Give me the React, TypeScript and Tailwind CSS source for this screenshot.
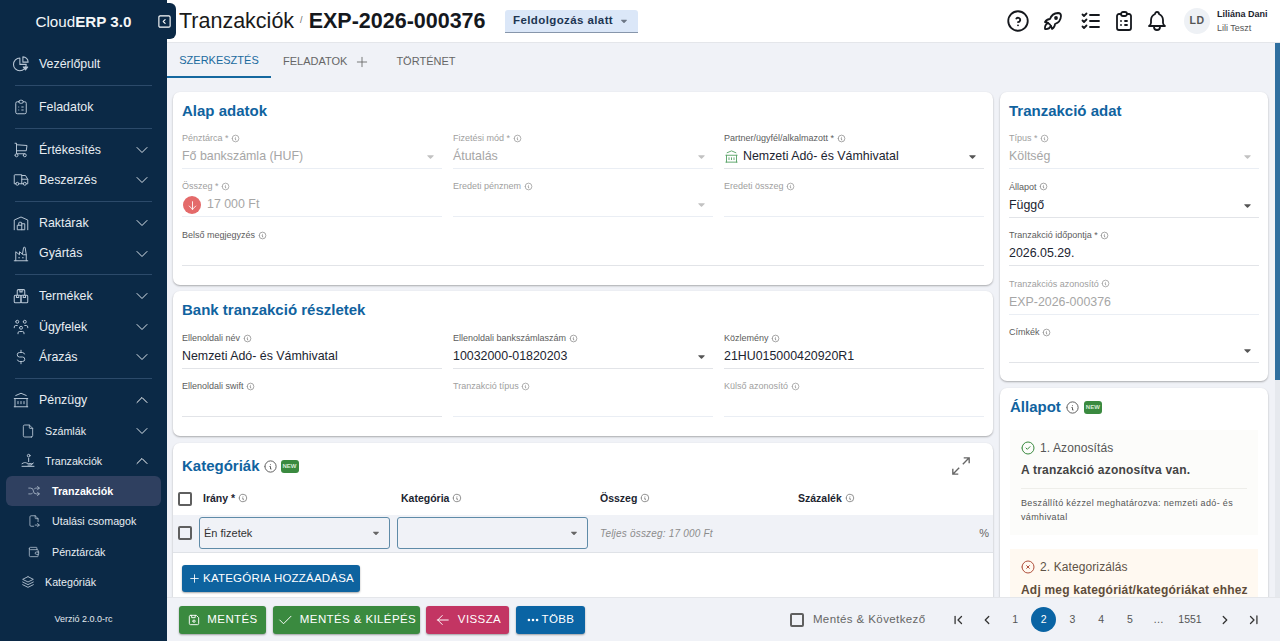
import React from "react";
import {
  TbChevronDown, TbChevronUp, TbClipboardList, TbShoppingCart, TbTruck, TbBuildingWarehouse,
  TbBuildingFactory2, TbUsersGroup, TbCurrencyDollar, TbBuildingBank, TbFile, TbArrowsShuffle,
  TbFileExport, TbWallet, TbStack2, TbHelpCircle, TbRocket, TbListCheck, TbBell, TbInfoCircle, TbPlus,
  TbCaretDownFilled, TbArrowDown, TbCircleCheck, TbCircleX, TbDeviceFloppy, TbCheck, TbArrowLeft, TbDots,
  TbChevronLeft, TbChevronRight, TbChevronLeftPipe, TbChevronRightPipe, TbSquareChevronLeft,
} from "react-icons/tb";

type IconT = React.ComponentType<{ size?: number; className?: string; strokeWidth?: number }>;

function HandCoin({ size = 16, className = "" }: { size?: number; className?: string }) {
  return (
    <svg width={size} height={size} viewBox="0 0 24 24" fill="none" stroke="currentColor" strokeWidth={1.5} strokeLinecap="round" strokeLinejoin="round" className={className}>
      <circle cx="13" cy="4" r="2" />
      <path d="M13 8v5" />
      <path d="M3 20h18" />
      <path d="M3 16c3-2 5-2 7-1l3 1h4c1 0 1 2 0 2h-5" />
      <path d="M17 17l3-2" />
    </svg>
  );
}

function PieIcon({ size = 16, className = "" }: { size?: number; className?: string }) {
  return (
    <svg width={size} height={size} viewBox="0 0 24 24" fill="none" stroke="currentColor" strokeWidth={1.4} strokeLinejoin="round" className={className}>
      <path d="M10.5 4a8.5 8.5 0 1 0 8.5 8.5h-8.5z" />
      <path d="M14.5 2.5a7 7 0 0 1 7 7h-7z" />
      <path d="M15 16h6l-3 4z" fill="currentColor" />
    </svg>
  );
}

function BoxesIcon({ size = 16, className = "" }: { size?: number; className?: string }) {
  return (
    <svg width={size} height={size} viewBox="0 0 24 24" fill="none" stroke="currentColor" strokeWidth={1.4} strokeLinejoin="round" className={className}>
      <path d="M7 11V5a1.5 1.5 0 0 1 1.5-1.5h7A1.5 1.5 0 0 1 17 5v6" />
      <path d="M10.5 3.5v3h3v-3" />
      <rect x="3" y="11" width="9" height="10" rx="1.5" />
      <rect x="12" y="11" width="9" height="10" rx="1.5" />
      <path d="M6 11v3h3v-3M15 11v3h3v-3" />
    </svg>
  );
}

function NavItem({ icon: Icon, label, chevron, sub }: { icon: IconT; label: string; chevron?: "up" | "down"; sub?: boolean }) {
  return (
    <div className={`relative flex items-center pl-[13px] pr-[15px] text-[#e8edf2] ${sub ? "h-[30.3px]" : "h-[30.5px]"}`}>
      <span className={`flex w-[16px] justify-center ${sub ? "ml-[7px]" : ""}`}>
        <Icon size={sub ? 16 : 18} strokeWidth={1.3} className="shrink-0 text-[#b9c7d6]" />
      </span>
      <span className={`${sub ? "ml-[9px] text-[10.7px]" : "ml-[10px] text-[12.4px]"} flex-1 whitespace-nowrap`}>{label}</span>
      {chevron === "down" && <TbChevronDown size={20} strokeWidth={1.2} className="text-[#dbe3ea]" />}
      {chevron === "up" && <TbChevronUp size={20} strokeWidth={1.2} className="text-[#ffffff]" />}
    </div>
  );
}

function Divider() {
  return <div className="mx-[15px] my-[5.65px] h-px bg-[#2c4a6a]" />;
}

function SubSub({ icon: Icon, label, active }: { icon: IconT; label: string; active?: boolean }) {
  return (
    <div className={`mx-[6px] flex h-[30.3px] items-center rounded-[6px] pl-[21px] ${active ? "bg-[#2f4060] font-bold text-white" : "text-[#e8edf2]"}`}>
      <span className="flex w-[14px] justify-center"><Icon size={14} strokeWidth={1.3} className="shrink-0 text-[#b9c7d6]" /></span>
      <span className="ml-[11px] whitespace-nowrap text-[10.7px]">{label}</span>
    </div>
  );
}

function Sidebar() {
  return (
    <aside className="flex h-full w-[167px] shrink-0 flex-col bg-[#0b2946]">
      <div className="flex h-[49px] items-start justify-center pt-[12px] text-[15.2px] leading-[20px] text-[#f4f6f8]">
        <span>Cloud<span className="font-bold">ERP 3.0</span></span>
      </div>
      <NavItem icon={PieIcon as IconT} label="Vezérlőpult" />
      <Divider />
      <NavItem icon={TbClipboardList} label="Feladatok" />
      <Divider />
      <NavItem icon={TbShoppingCart} label="Értékesítés" chevron="down" />
      <NavItem icon={TbTruck} label="Beszerzés" chevron="down" />
      <Divider />
      <NavItem icon={TbBuildingWarehouse} label="Raktárak" chevron="down" />
      <NavItem icon={TbBuildingFactory2} label="Gyártás" chevron="down" />
      <Divider />
      <NavItem icon={BoxesIcon as IconT} label="Termékek" chevron="down" />
      <NavItem icon={TbUsersGroup} label="Ügyfelek" chevron="down" />
      <NavItem icon={TbCurrencyDollar} label="Árazás" chevron="down" />
      <Divider />
      <NavItem icon={TbBuildingBank} label="Pénzügy" chevron="up" />
      <NavItem sub icon={TbFile} label="Számlák" chevron="down" />
      <NavItem sub icon={HandCoin as IconT} label="Tranzakciók" chevron="up" />
      <SubSub active icon={TbArrowsShuffle} label="Tranzakciók" />
      <SubSub icon={TbFileExport} label="Utalási csomagok" />
      <SubSub icon={TbWallet} label="Pénztárcák" />
      <NavItem sub icon={TbStack2} label="Kategóriák" />
      <div className="mt-[16px] text-center text-[9px] text-[#e3e9ef]">Verzió 2.0.0-rc</div>
    </aside>
  );
}

function Info({ size = 10, className = "" }: { size?: number; className?: string }) {
  return <TbInfoCircle size={size} strokeWidth={1.5} className={`inline-block align-[-1.5px] ${className}`} />;
}

function Field({ label, value, disabled, select, leading }: { label: string; value?: string; disabled?: boolean; select?: boolean; leading?: React.ReactNode }) {
  return (
    <div className={`flex h-[37px] flex-col border-b ${disabled ? "border-[#eaeef4]" : "border-[#e2e4e8]"}`}>
      <div className={`h-[12px] whitespace-nowrap text-[9px] leading-[12px] ${disabled ? "text-[#a0a0a0]" : "text-[#5c5c5c]"}`}>
        {label} <Info size={9} className={disabled ? "text-[#777]" : "text-[#666]"} />
      </div>
      <div className="flex flex-1 items-center pt-[1px]">
        {leading}
        <span className={`flex-1 whitespace-nowrap text-[12.4px] ${disabled ? "text-[#a6a6a6]" : "text-[#1c2430]"}`}>{value}</span>
        {select && <TbCaretDownFilled size={11} className={`mr-[6px] ${disabled ? "text-[#c2c2c2]" : "text-[#555]"}`} />}
      </div>
    </div>
  );
}

function Card({ children, className = "" }: { children: React.ReactNode; className?: string }) {
  return <section className={`shrink-0 rounded-[7px] bg-white shadow-[0_1px_2px_rgba(0,0,0,0.3)] ${className}`}>{children}</section>;
}

function Title({ children }: { children: React.ReactNode }) {
  return <h2 className="h-[20px] text-[15px] font-bold leading-[20px] text-[#10639f]">{children}</h2>;
}

function NewBadge() {
  return <span className="flex h-[13px] w-[18px] items-center justify-center rounded-[3px] bg-[#3a8a3f] text-[6px] font-bold leading-none text-[#d8ecd9]">NEW</span>;
}

function Box({ className = "" }: { className?: string }) {
  return <span className={`block h-[14px] w-[14px] shrink-0 rounded-[2px] border-2 border-[#5f5f5f] ${className}`} />;
}

function Btn({ bg, w, icon, children }: { bg: string; w: string; icon: React.ReactNode; children: React.ReactNode }) {
  return (
    <button className={`flex h-[28px] ${w} ${bg} items-center justify-center gap-[6px] rounded-[3px] text-[11.5px] font-medium tracking-[0.4px] text-white shadow-[0_1px_2px_rgba(0,0,0,0.35)]`}>
      {icon}
      {children}
    </button>
  );
}

function PageNum({ n, active }: { n: string; active?: boolean }) {
  return (
    <span className={`flex h-[25px] min-w-[25px] items-center justify-center rounded-full text-[10.5px] ${active ? "bg-[#0a64a4] text-white" : "text-[#555]"}`}>{n}</span>
  );
}

export default function App() {
  return (
    <div className="flex h-screen w-full overflow-hidden bg-[#f0f2f7] font-['Liberation_Sans',Arial,sans-serif] text-[#1c2430]">
      <Sidebar />
      <div className="relative flex min-w-0 flex-1 flex-col">
        <button className="absolute -left-[17px] top-[3px] z-10 flex h-[36px] w-[26px] items-center justify-center rounded-r-[6px] bg-[#0b2946] pl-[2px] text-white">
          <TbSquareChevronLeft size={15} strokeWidth={1.8} />
        </button>
        <header className="flex h-[43px] shrink-0 items-center border-b border-[#e4e6ea] bg-white pl-[12px] pr-[12px]">
          <span className="pt-[1px] text-[21.5px] leading-none text-[#1a1a1a]">Tranzakciók</span>
          <span className="mx-[6px] text-[9px] text-[#666]">/</span>
          <span className="pt-[1px] text-[21.5px] font-bold leading-none text-[#15181d]">EXP-2026-000376</span>
          <div className="ml-[19px] flex h-[23px] w-[133px] items-center justify-center gap-[6px] rounded-t-[3px] border-b border-[#8796ab] bg-[#dbe7f8] text-[11.5px] font-bold tracking-[0.4px] text-[#1d3552]">
            Feldolgozás alatt
            <TbCaretDownFilled size={10} className="text-[#6d7786]" />
          </div>
          <div className="ml-auto flex items-center">
            <TbHelpCircle size={26} strokeWidth={1.7} className="text-[#15181d]" />
            <TbRocket size={24} strokeWidth={1.8} className="ml-[10px] text-[#15181d]" />
            <TbListCheck size={24} strokeWidth={1.8} className="ml-[14px] text-[#15181d]" />
            <TbClipboardList size={24} strokeWidth={1.8} className="ml-[9px] text-[#15181d]" />
            <TbBell size={24} strokeWidth={1.8} className="ml-[9px] text-[#15181d]" />
            <span className="ml-[15px] flex h-[26px] w-[26px] items-center justify-center rounded-full bg-[#eef1f5] text-[10.5px] font-bold tracking-[0.5px] text-[#555]">LD</span>
            <div className="ml-[7px] w-[51px] text-[9px] leading-[14px]">
              <div className="whitespace-nowrap font-bold text-[#1c2430]">Liliána Dani</div>
              <div className="whitespace-nowrap text-[#555]">Lili Teszt</div>
            </div>
          </div>
        </header>

        <div className="flex min-h-0 flex-1">
          <div className="flex min-w-0 flex-1 flex-col">
            <nav className="flex h-[35px] shrink-0 text-[11px]">
              <div className="flex w-[104px] items-center justify-center border-b-2 border-[#15689f] pt-[2px] text-[#1a6a9e]">SZERKESZTÉS</div>
              <div className="ml-[12px] flex items-center pt-[2px] text-[#666]">FELADATOK<TbPlus size={16} strokeWidth={1.3} className="ml-[7px]" /></div>
              <div className="ml-[26px] flex items-center pt-[2px] text-[#666]">TÖRTÉNET</div>
            </nav>
            <div className="flex min-h-0 flex-1 gap-[7px] overflow-hidden pl-[6px] pt-[14px]">
              <div className="flex w-[820px] shrink-0 flex-col gap-[6px]">
                <Card className="h-[193px] px-[9px] pt-[9px]">
                  <Title>Alap adatok</Title>
                  <div className="mt-[11px] grid grid-cols-3 gap-x-[11px] gap-y-[11px]">
                    <Field label="Pénztárca *" value="Fő bankszámla (HUF)" disabled select />
                    <Field label="Fizetési mód *" value="Átutalás" disabled select />
                    <Field label="Partner/ügyfél/alkalmazott *" value="Nemzeti Adó- és Vámhivatal" select leading={<TbBuildingBank size={15} strokeWidth={1.5} className="mr-[4px] text-[#5aa469]" />} />
                    <Field label="Összeg *" value="17 000 Ft" disabled leading={
                      <span className="ml-[1px] mr-[6px] mt-[1px] flex h-[18px] w-[18px] items-center justify-center rounded-full bg-[#e46a6a] text-white"><TbArrowDown size={13} strokeWidth={1.6} /></span>
                    } />
                    <Field label="Eredeti pénznem" disabled select />
                    <Field label="Eredeti összeg" disabled />
                  </div>
                  <div className="mt-[12px] flex h-[37px] flex-col border-b border-[#e2e4e8]">
                    <div className="whitespace-nowrap text-[9px] leading-[12px] text-[#5c5c5c]">Belső megjegyzés <Info size={9} className="text-[#666]" /></div>
                  </div>
                </Card>

                <Card className="h-[145px] px-[9px] pt-[9px]">
                  <Title>Bank tranzakció részletek</Title>
                  <div className="mt-[12px] grid grid-cols-3 gap-x-[11px] gap-y-[11px]">
                    <Field label="Ellenoldali név" value="Nemzeti Adó- és Vámhivatal" />
                    <Field label="Ellenoldali bankszámlaszám" value="10032000-01820203" select />
                    <Field label="Közlemény" value="21HU015000420920R1" />
                    <Field label="Ellenoldali swift" />
                    <Field label="Tranzakció típus" disabled />
                    <Field label="Külső azonosító" disabled />
                  </div>
                </Card>

                <Card className="mt-[1px] h-[200px] pt-[12px]">
                  <div className="flex items-center pl-[9px] pr-[22px]">
                    <Title>Kategóriák</Title>
                    <Info size={15} className="ml-[3px] text-[#555]" />
                    <span className="ml-[3px] flex"><NewBadge /></span>
                    <svg width="20" height="20" viewBox="0 0 22 22" fill="none" stroke="#666" strokeWidth="1.5" className="my-[1px] ml-auto">
                      <path d="M14 2h6v6M20 2l-7 7M8 20H2v-6M2 20l7-7" />
                    </svg>
                  </div>
                  <div className="relative mt-[5px] flex h-[33px] items-center pl-[5px] text-[10.5px] font-bold text-[#1c2430]">
                    <Box />
                    <div className="ml-[11px] w-[198px] whitespace-nowrap">Irány * <Info size={10} className="font-normal text-[#555]" /></div>
                    <div className="w-[199px] whitespace-nowrap">Kategória <Info size={10} className="text-[#555]" /></div>
                    <div className="w-[198px] whitespace-nowrap">Összeg <Info size={10} className="text-[#555]" /></div>
                    <div className="whitespace-nowrap">Százalék <Info size={10} className="text-[#555]" /></div>
                  </div>
                  <div className="flex h-[38px] items-center border-b border-[#dfe2e7] bg-[#f0f2f7] pb-[1px] pl-[5px] pr-[4px]">
                    <Box />
                    <div className="ml-[7px] flex h-[32px] w-[191px] items-center rounded-[3px] border border-[#5f8ba8] pl-[4px] pr-[8px] text-[11px] text-[#333]">
                      <span className="flex-1">Én fizetek</span>
                      <TbCaretDownFilled size={10} className="text-[#666]" />
                    </div>
                    <div className="ml-[7px] flex h-[32px] w-[191px] items-center justify-end rounded-[3px] border border-[#5f8ba8] pr-[8px]">
                      <TbCaretDownFilled size={10} className="text-[#666]" />
                    </div>
                    <span className="ml-[12px] text-[10px] italic tracking-[0.2px] text-[#8c8c8c]">Teljes összeg: 17 000 Ft</span>
                    <span className="ml-auto text-[11px] text-[#666]">%</span>
                  </div>
                  <button className="ml-[9px] mt-[12px] flex h-[27px] w-[178px] items-center justify-center gap-[2px] rounded-[3px] bg-[#0e639f] text-[11.5px] font-medium tracking-[0.2px] text-white shadow-[0_1px_2px_rgba(0,0,0,0.35)]">
                    <TbPlus size={13} strokeWidth={1.6} />KATEGÓRIA HOZZÁADÁSA
                  </button>
                </Card>
              </div>

              <div className="flex w-[268px] shrink-0 flex-col gap-[7px]">
                <Card className="h-[289px] px-[9px] pt-[9px]">
                  <Title>Tranzakció adat</Title>
                  <div className="mt-[11px] flex flex-col gap-[11.5px]">
                    <Field label="Típus *" value="Költség" disabled select />
                    <Field label="Állapot" value="Függő" select />
                    <Field label="Tranzakció időpontja *" value="2026.05.29." />
                    <Field label="Tranzakciós azonosító" value="EXP-2026-000376" disabled />
                    <Field label="Címkék" select />
                  </div>
                </Card>
                <Card className="h-[260px] px-[10px] pt-[9px]">
                  <div className="flex items-center">
                    <Title>Állapot</Title>
                    <Info size={15} className="ml-[4px] text-[#555]" />
                    <span className="ml-[4px] flex"><NewBadge /></span>
                  </div>
                  <div className="mt-[13px] h-[105px] bg-[#fcfcfa] px-[11px] pt-[10px]">
                    <div className="flex h-[16px] items-center text-[12px] text-[#555]">
                      <TbCircleCheck size={16} strokeWidth={1.5} className="-ml-[1px] text-[#3a8a3f]" />
                      <span className="ml-[4px] tracking-[0.1px]">1. Azonosítás</span>
                    </div>
                    <div className="mt-[6px] h-[16px] text-[12px] font-bold leading-[16px] tracking-[0.2px] text-[#444]">A tranzakció azonosítva van.</div>
                    <div className="mt-[10px] border-t border-[#eeeeea] pt-[7px] text-[9px] leading-[14px] tracking-[0.35px] text-[#555]">
                      Beszállító kézzel meghatározva: nemzeti adó- és vámhivatal
                    </div>
                  </div>
                  <div className="mt-[14px] h-[80px] bg-[#fff9f1] px-[11px] pt-[10px]">
                    <div className="flex h-[16px] items-center text-[12px] text-[#5e5347]">
                      <TbCircleX size={16} strokeWidth={1.5} className="-ml-[1px] text-[#b0503c]" />
                      <span className="ml-[4px] tracking-[0.1px]">2. Kategorizálás</span>
                    </div>
                    <div className="mt-[7px] whitespace-nowrap text-[12px] font-bold leading-[16px] tracking-[0.2px] text-[#5e4c3a]">Adj meg kategóriát/kategóriákat ehhez</div>
                  </div>
                </Card>
              </div>
            </div>
          </div>
          <div className="w-[5px] shrink-0 bg-[#e6e9ee]">
            <div className="h-[337px] w-full bg-[#2f6f9f]" />
          </div>
        </div>

        <footer className="flex h-[44px] shrink-0 items-center border-t border-[#e4e6ea] bg-[#f0f2f7] pl-[12px] pr-[19px]">
          <div className="flex gap-[6.5px]">
            <Btn bg="bg-[#3a8a3f]" w="w-[87px]" icon={<TbDeviceFloppy size={14} strokeWidth={1.6} />}>MENTÉS</Btn>
            <Btn bg="bg-[#3a8a3f]" w="w-[147px]" icon={<TbCheck size={18} strokeWidth={1.3} />}>MENTÉS &amp; KILÉPÉS</Btn>
            <Btn bg="bg-[#c33563]" w="w-[83px]" icon={<TbArrowLeft size={18} strokeWidth={1.3} />}>VISSZA</Btn>
            <button className="flex h-[28px] w-[69px] items-center justify-center gap-[2px] rounded-[3px] bg-[#0a64a4] text-[11.5px] font-medium tracking-[0.4px] text-white shadow-[0_1px_2px_rgba(0,0,0,0.35)]">
              <TbDots size={14} strokeWidth={2.5} />TÖBB
            </button>
          </div>
          <div className="ml-auto flex items-center">
            <Box />
            <span className="ml-[9px] text-[11.5px] tracking-[0.4px] text-[#666]">Mentés &amp; Következő</span>
            <div className="ml-[25px] flex items-center text-[#333]">
              <span className="flex w-[14px] justify-center"><TbChevronLeftPipe size={14} strokeWidth={2.2} /></span>
              <span className="ml-[15px] flex w-[14px] justify-center"><TbChevronLeft size={14} strokeWidth={2.2} /></span>
              <div className="ml-[9px] flex items-center gap-[3.7px]">
                <PageNum n="1" />
                <PageNum n="2" active />
                <PageNum n="3" />
                <PageNum n="4" />
                <PageNum n="5" />
                <PageNum n="…" />
              </div>
              <span className="ml-[4px] w-[30px] text-center text-[10.5px] text-[#555]">1551</span>
              <span className="ml-[13px] flex w-[14px] justify-center"><TbChevronRight size={14} strokeWidth={2.2} /></span>
              <span className="ml-[15px] flex w-[14px] justify-center"><TbChevronRightPipe size={14} strokeWidth={2.2} /></span>
            </div>
          </div>
        </footer>
      </div>
    </div>
  );
}
